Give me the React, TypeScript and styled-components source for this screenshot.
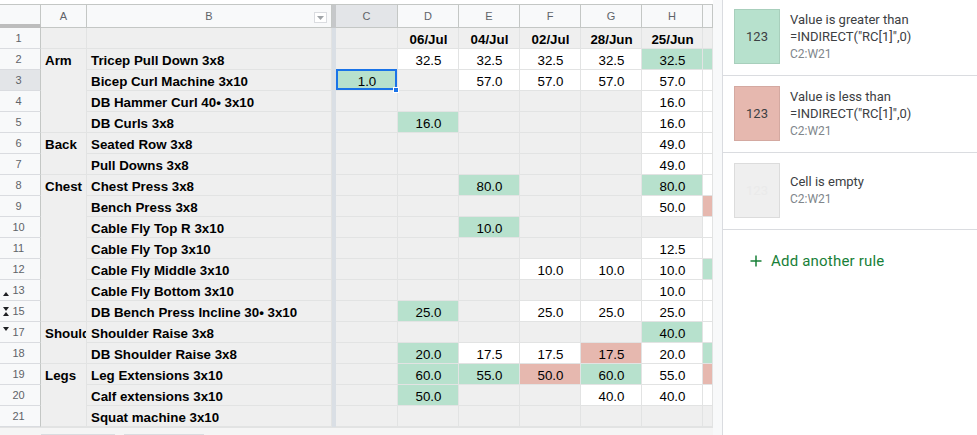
import React from 'react';
import styled, { createGlobalStyle, css } from 'styled-components';

const GlobalStyle = createGlobalStyle`
  html, body { margin: 0; padding: 0; background: #fff; }
  body { font-family: "Liberation Sans", Arial, sans-serif; }
  #root { width: 977px; height: 435px; overflow: hidden; }
`;

const GRAY = '#efefef';
const GREEN = '#b7e1cd';
const RED = '#e6b8af';
const WHITE = '#ffffff';

const Page = styled.div`
  display: flex;
  width: 977px;
  height: 435px;
  overflow: hidden;
`;

const SheetArea = styled.div`
  display: flex;
  flex-direction: column;
  width: 713px;
  flex: none;
`;

const TopStrip = styled.div`
  height: 4px;
  border-bottom: 1px solid #c4c7c5;
  background: #fff;
`;

const Grid = styled.div`
  display: grid;
  grid-template-columns: 41px 46px 245px 4px 62px repeat(5, 61px) 10px;
  grid-template-rows: 23px repeat(19, 21px);
`;

const HeadCell = styled.div<{ $selected?: boolean; $corner?: boolean }>`
  box-sizing: border-box;
  position: relative;
  display: flex;
  align-items: center;
  justify-content: center;
  background: ${(p) => (p.$selected ? '#e3e5e8' : '#f8f9fa')};
  border-right: 1px solid #c4c7c5;
  border-bottom: ${(p) => (p.$corner ? '4px solid #bdbdbd' : '1px solid #c4c7c5')};
  font-size: 11px;
  color: #5f6368;
`;

const FilterBox = styled.span`
  position: absolute;
  right: 4px;
  top: 7px;
  width: 13px;
  height: 11px;
  box-sizing: border-box;
  border: 1px solid #dadce0;
  background: #fff;
  display: flex;
  align-items: center;
  justify-content: center;
`;

const FreezeBar = styled.div<{ $head?: boolean }>`
  grid-column: 4;
  grid-row: ${(p) => (p.$head ? '1' : '2 / span 19')};
  background: ${(p) => (p.$head ? '#c6c8ca' : '#dadfe5')};
`;

const RowNum = styled.div<{ $selected?: boolean }>`
  box-sizing: border-box;
  position: relative;
  display: flex;
  align-items: center;
  justify-content: center;
  padding-right: 3px;
  background: ${(p) => (p.$selected ? '#e3e5e8' : '#f8f9fa')};
  border-right: 1px solid #c4c7c5;
  border-bottom: 1px solid #dadce0;
  font-size: 11px;
  color: #5f6368;
`;

const Marker = styled.svg<{ $top: number }>`
  position: absolute;
  left: 3px;
  top: ${(p) => p.$top}px;
`;

const Cell = styled.div<{ $bg: string; $bold?: boolean; $center?: boolean; $sel?: boolean }>`
  box-sizing: border-box;
  display: flex;
  align-items: flex-end;
  justify-content: ${(p) => (p.$center ? 'center' : 'flex-start')};
  padding: 0 3px 0 4px;
  background: ${(p) => p.$bg};
  border-right: 1px solid #e2e3e3;
  border-bottom: 1px solid #e2e3e3;
  font-size: 13.33px;
  line-height: 16px;
  font-weight: ${(p) => (p.$bold ? 700 : 400)};
  color: #000;
  white-space: nowrap;
  ${(p) =>
    p.$sel &&
    css`
      position: relative;
      z-index: 1;
      &::before {
        content: '';
        position: absolute;
        left: 0;
        top: -1px;
        width: 61px;
        height: 21px;
        box-sizing: border-box;
        border: 2px solid #1a73e8;
      }
      &::after {
        content: '';
        position: absolute;
        left: 57px;
        top: 17px;
        width: 6px;
        height: 6px;
        box-sizing: border-box;
        background: #1a73e8;
        border: 1px solid #fff;
      }
    `}
`;

const MergedCell = styled.div<{ $start: number; $span: number }>`
  box-sizing: border-box;
  grid-column: 2;
  grid-row: ${(p) => p.$start} / span ${(p) => p.$span};
  display: flex;
  align-items: flex-start;
  padding: 4px 0 0 4px;
  background: ${GRAY};
  border-right: 1px solid #e2e3e3;
  border-bottom: 1px solid #e2e3e3;
  font-size: 13.33px;
  line-height: 16px;
  font-weight: 700;
  white-space: nowrap;
  overflow: hidden;
  color: #000;
`;

const BottomBar = styled.div`
  flex: 1;
  display: flex;
  gap: 9px;
  padding-left: 41px;
  background: #f5f5f5;
  border-top: 1px solid #e2e3e3;
`;

const Tab = styled.div<{ $w: number }>`
  width: ${(p) => p.$w}px;
  margin-top: 6px;
  border-top: 1px solid #dadce0;
  border-left: 1px solid #dadce0;
  border-right: 1px solid #dadce0;
  background: #fafafa;
`;

const Gutter = styled.div`
  width: 9px;
  flex: none;
  background: #f8f9fa;
`;

const Panel = styled.aside`
  flex: 1;
  display: flex;
  flex-direction: column;
  border-left: 1px solid #dadce0;
  background: #fff;
  font-family: Roboto, "Liberation Sans", sans-serif;
`;

const RuleList = styled.div`
  margin-top: -1px;
  display: flex;
  flex-direction: column;
`;

const Rule = styled.div`
  display: flex;
  align-items: center;
  gap: 10px;
  padding: 10px 11px 11px 11px;
  border-bottom: 1px solid #dadce0;
`;

const Swatch = styled.div<{ $bg: string; $faint?: boolean }>`
  box-sizing: border-box;
  width: 46px;
  height: 55px;
  flex: none;
  display: flex;
  align-items: center;
  justify-content: center;
  background: ${(p) => p.$bg};
  border: 1px solid rgba(0, 0, 0, 0.08);
  font-size: 13px;
  color: ${(p) => (p.$faint ? '#eaeaea' : '#3c4043')};
`;

const RuleText = styled.div`
  display: flex;
  flex-direction: column;
`;

const Primary = styled.div`
  font-size: 13px;
  line-height: 17px;
  color: #3c4043;
`;

const Secondary = styled.div`
  font-size: 12px;
  line-height: 18px;
  color: #80868b;
`;

const AddRule = styled.div`
  display: flex;
  align-items: center;
  gap: 9px;
  padding: 22px 0 0 27px;
  font-size: 15px;
  font-weight: 400;
  letter-spacing: 0.2px;
  color: #188038;
  line-height: 18px;
`;

type RowSpec = { n: number; b: string; cells: string[]; marker?: 'up' | 'both' | 'down' };

const rows: RowSpec[] = [
  { n: 1, b: '', cells: ['', 'h|06/Jul', 'h|04/Jul', 'h|02/Jul', 'h|28/Jun', 'h|25/Jun', ''] },
  { n: 2, b: 'Tricep Pull Down 3x8', cells: ['', '32.5', '32.5', '32.5', '32.5', 'g|32.5', 'g|'] },
  { n: 3, b: 'Bicep Curl Machine 3x10', cells: ['s|1.0', '', '57.0', '57.0', '57.0', '57.0', 'w|'] },
  { n: 4, b: 'DB Hammer Curl 40\u2022 3x10', cells: ['', '', '', '', '', '16.0', 'w|'] },
  { n: 5, b: 'DB Curls 3x8', cells: ['', 'g|16.0', '', '', '', '16.0', 'w|'] },
  { n: 6, b: 'Seated Row 3x8', cells: ['', '', '', '', '', '49.0', 'w|'] },
  { n: 7, b: 'Pull Downs 3x8', cells: ['', '', '', '', '', '49.0', 'w|'] },
  { n: 8, b: 'Chest Press 3x8', cells: ['', '', 'g|80.0', '', '', 'g|80.0', 'w|'] },
  { n: 9, b: 'Bench Press 3x8', cells: ['', '', '', '', '', '50.0', 'r|'] },
  { n: 10, b: 'Cable Fly Top R 3x10', cells: ['', '', 'g|10.0', '', '', '', 'w|'] },
  { n: 11, b: 'Cable Fly Top 3x10', cells: ['', '', '', '', '', '12.5', 'w|'] },
  { n: 12, b: 'Cable Fly Middle 3x10', cells: ['', '', '', '10.0', '10.0', '10.0', 'g|'] },
  { n: 13, b: 'Cable Fly Bottom 3x10', cells: ['', '', '', '', '', '10.0', 'w|'], marker: 'up' },
  { n: 15, b: 'DB Bench Press Incline 30\u2022 3x10', cells: ['', 'g|25.0', '', '25.0', '25.0', '25.0', 'w|'], marker: 'both' },
  { n: 17, b: 'Shoulder Raise 3x8', cells: ['', '', '', '', '', 'g|40.0', 'w|'], marker: 'down' },
  { n: 18, b: 'DB Shoulder Raise 3x8', cells: ['', 'g|20.0', '17.5', '17.5', 'r|17.5', '20.0', 'g|'] },
  { n: 19, b: 'Leg Extensions 3x10', cells: ['', 'g|60.0', 'g|55.0', 'r|50.0', 'g|60.0', '55.0', 'r|'] },
  { n: 20, b: 'Calf extensions 3x10', cells: ['', 'g|50.0', '', '', '40.0', '40.0', 'w|'] },
  { n: 21, b: 'Squat machine 3x10', cells: ['', '', '', '', '', '', ''] },
];

const merges = [
  { label: '', start: 0, span: 1 },
  { label: 'Arm', start: 1, span: 4 },
  { label: 'Back', start: 5, span: 2 },
  { label: 'Chest', start: 7, span: 7 },
  { label: 'Shoulder', start: 14, span: 2 },
  { label: 'Legs', start: 16, span: 3 },
];

const parseCell = (s: string) => {
  if (s === '') return { bg: GRAY, v: '', bold: false, sel: false };
  if (!s.includes('|')) return { bg: WHITE, v: s, bold: false, sel: false };
  const [k, v] = s.split('|');
  switch (k) {
    case 'g':
      return { bg: GREEN, v, bold: false, sel: false };
    case 'r':
      return { bg: RED, v, bold: false, sel: false };
    case 'h':
      return { bg: GRAY, v, bold: true, sel: false };
    case 's':
      return { bg: GREEN, v, bold: false, sel: true };
    default:
      return { bg: WHITE, v, bold: false, sel: false };
  }
};

const HiddenMarker: React.FC<{ kind: 'up' | 'both' | 'down' }> = ({ kind }) => {
  if (kind === 'up')
    return (
      <Marker $top={12} width="6" height="4" viewBox="0 0 6 4">
        <polygon points="0,4 3,0 6,4" fill="#202124" />
      </Marker>
    );
  if (kind === 'down')
    return (
      <Marker $top={5} width="6" height="4" viewBox="0 0 6 4">
        <polygon points="0,0 6,0 3,4" fill="#202124" />
      </Marker>
    );
  return (
    <Marker $top={6} width="6" height="9" viewBox="0 0 6 9">
      <polygon points="0,0 6,0 3,4" fill="#202124" />
      <polygon points="0,9 3,5 6,9" fill="#202124" />
    </Marker>
  );
};

const FilterIcon = () => (
  <FilterBox>
    <svg width="7" height="4" viewBox="0 0 7 4">
      <polygon points="0,0 7,0 3.5,4" fill="#a0a4a8" />
    </svg>
  </FilterBox>
);

const PlusIcon = () => (
  <svg width="12" height="12" viewBox="0 0 12 12">
    <path d="M6 0.5v11M0.5 6h11" stroke="#188038" strokeWidth="1.5" fill="none" />
  </svg>
);

const colLetters = ['C', 'D', 'E', 'F', 'G', 'H', ''];

export default function App() {
  return (
    <>
      <GlobalStyle />
      <Page>
        <SheetArea>
          <TopStrip />
          <Grid>
            <FreezeBar $head />
            <FreezeBar />
            {merges.map((m) => (
              <MergedCell key={m.start} $start={m.start + 2} $span={m.span}>
                {m.label}
              </MergedCell>
            ))}
            <HeadCell $corner />
            <HeadCell>A</HeadCell>
            <HeadCell>
              B
              <FilterIcon />
            </HeadCell>
            {colLetters.map((c, i) => (
              <HeadCell key={i} $selected={c === 'C'}>
                {c}
              </HeadCell>
            ))}
            {rows.map((r) => (
              <React.Fragment key={r.n}>
                <RowNum $selected={r.n === 3}>
                  {r.marker && <HiddenMarker kind={r.marker} />}
                  {r.n}
                </RowNum>
                <Cell $bg={GRAY} $bold>
                  {r.b}
                </Cell>
                {r.cells.map((s, i) => {
                  const c = parseCell(s);
                  return (
                    <Cell key={i} $bg={c.bg} $bold={c.bold} $center $sel={c.sel}>
                      {c.v}
                    </Cell>
                  );
                })}
              </React.Fragment>
            ))}
          </Grid>
          <BottomBar>
            <Tab $w={72} />
            <Tab $w={78} />
          </BottomBar>
        </SheetArea>
        <Gutter />
        <Panel>
          <RuleList>
            <Rule>
              <Swatch $bg={GREEN}>123</Swatch>
              <RuleText>
                <Primary>Value is greater than</Primary>
                <Primary>=INDIRECT("RC[1]",0)</Primary>
                <Secondary>C2:W21</Secondary>
              </RuleText>
            </Rule>
            <Rule>
              <Swatch $bg={RED}>123</Swatch>
              <RuleText>
                <Primary>Value is less than</Primary>
                <Primary>=INDIRECT("RC[1]",0)</Primary>
                <Secondary>C2:W21</Secondary>
              </RuleText>
            </Rule>
            <Rule>
              <Swatch $bg={GRAY} $faint>
                123
              </Swatch>
              <RuleText>
                <Primary>Cell is empty</Primary>
                <Secondary>C2:W21</Secondary>
              </RuleText>
            </Rule>
          </RuleList>
          <AddRule>
            <PlusIcon />
            Add another rule
          </AddRule>
        </Panel>
      </Page>
    </>
  );
}
